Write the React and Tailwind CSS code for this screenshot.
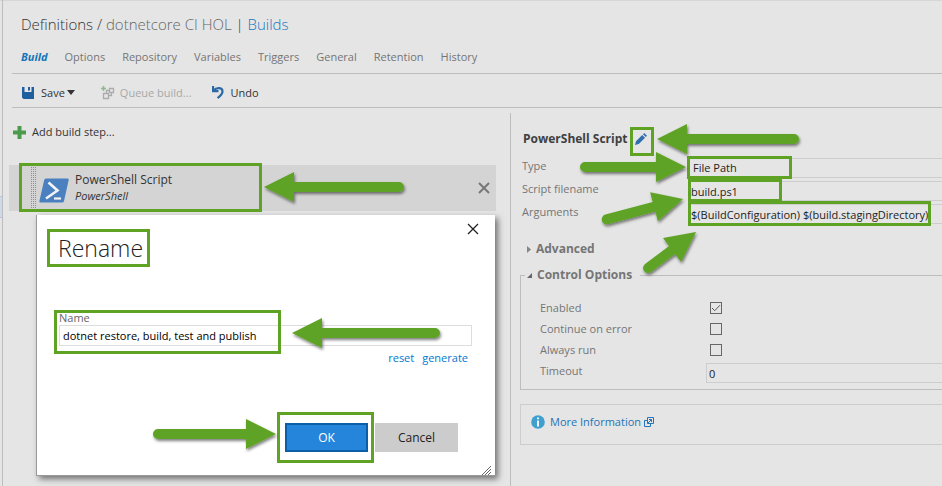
import React from "react";

const tabs = ["Options", "Repository", "Variables", "Triggers", "General", "Retention", "History"];

const arrows = [
  { x: 264, y: 187, len: 140, angle: 0 },
  { x: 657, y: 139, len: 142, angle: 0 },
  { x: 686, y: 167, len: 106, angle: 180 },
  { x: 683, y: 199, len: 84, angle: 165 },
  { x: 696, y: 232, len: 65, angle: 143 },
  { x: 292, y: 333, len: 148, angle: 0 },
  { x: 276, y: 434, len: 123, angle: 180 },
];

const frames = [
  [20, 164, 241, 47],
  [48, 230, 101, 36],
  [55, 311, 225, 42],
  [278, 413, 95, 49],
  [631, 128, 22, 27],
  [688, 157, 103, 21],
  [689, 180, 92, 21],
  [689, 202, 241, 23],
];

function Annotations() {
  return (
    <svg
      aria-hidden="true"
      className="pointer-events-none absolute top-0 left-0 z-20"
      width="942"
      height="486"
      viewBox="0 0 942 486"
    >
      <defs>
        <filter id="arrow-shadow" x="-20%" y="-60%" width="140%" height="220%">
          <feDropShadow dx="1" dy="2" stdDeviation="1.5" floodColor="#000" floodOpacity="0.5" />
        </filter>
      </defs>
      {frames.map(([x, y, w, h]) => (
        <rect key={`${x}-${y}`} x={x + 0.5} y={y + 0.5} width={w - 1} height={h - 1} fill="none" stroke="#5fa325" strokeWidth="3" />
      ))}
      {arrows.map((a) => (
        <g key={`${a.x}-${a.y}`} filter="url(#arrow-shadow)">
          <g transform={`translate(${a.x} ${a.y}) rotate(${a.angle})`} fill="#5fa325">
            <path d={`M0 0 L30 -15 V-5 H${a.len - 5} a5 5 0 0 1 0 10 H30 V15 Z`} />
          </g>
        </g>
      ))}
    </svg>
  );
}

function SaveIcon() {
  return (
    <svg width="12" height="12" viewBox="0 0 12 12" fill="#1f5f9f">
      <path d="M0 0h2.500v5h7V0H12v12H1.500L0 10.500z" />
      <path d="M6 0h2v3.500H6z" />
    </svg>
  );
}

function QueueIcon() {
  return (
    <svg width="14" height="14" viewBox="0 0 14 14" fill="none" stroke="#ababab" strokeWidth="1.300">
      <path d="M2.500 0v5M0 2.500h5" stroke="#8fb98a" strokeWidth="1.600" />
      <path d="M2.500 7.500h5v5h-5zM8.500 2.500h4v4h-4zM5.500 7V4.500h3M7.500 9.500h3V7" />
    </svg>
  );
}

function UndoIcon() {
  return (
    <svg width="12" height="13" viewBox="0 0 12 13" fill="none" stroke="#2b68a5" strokeWidth="2.200">
      <path d="M1 0v5.200h5.500" />
      <path d="M1.500 4.500C4 1.500 10.500 1 10.500 5.500c0 3-2.500 4.500-5 6.500" />
    </svg>
  );
}

function PlusIcon() {
  return (
    <svg width="13" height="13" viewBox="0 0 13 13" fill="#4c9a4c">
      <path d="M4.500 0h4v4.500H13v4H8.500V13h-4V8.500H0v-4h4.500z" />
    </svg>
  );
}

function PowerShellIcon() {
  return (
    <svg width="30" height="25" viewBox="0 0 30 25">
      <path d="M7 0.500h21.500q1.500 0 1.200 1.500L25 23q-.4 1.500-1.800 1.500H1.500Q0 24.500.4 23L5.200 2Q5.500.5 7 .5z" fill="#4a80bf" />
      <path d="M9.500 4.500l9 8-11.500 8" fill="none" stroke="#f2f4f7" strokeWidth="2.600" />
      <path d="M15 20.500h7" stroke="#f2f4f7" strokeWidth="2.200" />
    </svg>
  );
}

function CrossIcon({ size, stroke, width }) {
  return (
    <svg width={size} height={size} viewBox="0 0 12 12" fill="none" stroke={stroke} strokeWidth={width}>
      <path d="M1 1l10 10M11 1L1 11" />
    </svg>
  );
}

function PencilIcon() {
  return (
    <svg width="12" height="12" viewBox="0 0 12 12" fill="#2f6fae">
      <path d="M0 12l1-3.800L7.200 2 10 4.800 3.800 11zM8 1.200L9.200 0 12 2.800 10.800 4z" />
    </svg>
  );
}

function FieldRow({ label, id, children }) {
  return (
    <div className="flex items-start">
      <label htmlFor={id} className="w-[166px] shrink-0 text-[11px] leading-4 text-[#757575]">
        {label}
      </label>
      {children}
    </div>
  );
}

function CheckRow({ id, label, checked }) {
  return (
    <div className="flex h-[21px] items-center">
      <label htmlFor={id} className="w-[170px] shrink-0 text-[11px] leading-4 text-[#757575]">
        {label}
      </label>
      <span className="relative flex">
        <input
          id={id}
          type="checkbox"
          defaultChecked={checked}
          className="peer size-3 appearance-none border border-[#666]"
        />
        <svg
          className="pointer-events-none absolute inset-0 hidden peer-checked:block"
          width="12"
          height="12"
          viewBox="0 0 12 12"
          fill="none"
          stroke="#555"
        >
          <path d="M2 6l2.700 2.700L10 3.200" />
        </svg>
      </span>
    </div>
  );
}

function RenameDialog() {
  return (
    <section
      role="dialog"
      aria-labelledby="rename-title"
      className="absolute top-[107px] left-[33px] z-10 flex h-[261px] w-[459px] flex-col border-b border-l border-[#999] bg-white shadow-[3px_3px_6px_rgba(0,0,0,0.5)]"
    >
      <div className="flex items-start justify-between pt-2 pr-4 pl-[21px]">
        <h2 id="rename-title" className="pt-[9px] text-[23px] leading-8 font-light text-[#222]">
          Rename
        </h2>
        <button type="button" aria-label="Close" className="flex">
          <CrossIcon size={12} stroke="#222" width={1.3} />
        </button>
      </div>
      <div className="mt-[47px] flex flex-col pr-[23px] pl-[22px]">
        <label htmlFor="step-name" className="text-[11px] leading-[14px] text-[#666]">
          Name
        </label>
        <input
          id="step-name"
          defaultValue="dotnet restore, build, test and publish"
          className="h-[21px] w-full border border-[#ddd] px-[3px] text-[11px] text-black outline-none"
        />
        <div className="mt-1 flex justify-end gap-2 pr-1 text-[11px] leading-4 text-[#0078d0]">
          <a href="#reset">reset</a>
          <a href="#generate">generate</a>
        </div>
      </div>
      <div className="mt-auto mb-[23px] flex justify-end gap-[7px] pr-[37px]">
        <button type="button" className="h-[29px] w-[83px] border-2 border-[#0b5ea8] bg-[#2485db] text-xs text-white">
          OK
        </button>
        <button type="button" className="h-[29px] w-[83px] bg-[#ccc] text-xs text-[#222]">
          Cancel
        </button>
      </div>
      <svg className="absolute right-1 bottom-0" width="10" height="10" viewBox="0 0 10 10" stroke="#666">
        <path d="M1 10l9-9M4 10l6-6M7 10l3-3" />
      </svg>
    </section>
  );
}

function StepList() {
  return (
    <section className="relative w-[507px] shrink-0">
      <button type="button" className="ml-[10px] flex items-center gap-[6px] pt-4 text-[11px] leading-[16px] text-[#333]">
        <PlusIcon />
        Add build step...
      </button>
      <div className="mt-[25px] mr-[14px] ml-[6px] flex h-[46px] items-center bg-[#d4d4d4] pr-[6px] pl-[22px]">
        <svg width="5" height="42" className="shrink-0">
          <path d="M.5 0v42M2.500 0v42M4.500 0v42" stroke="#8f8f8f" strokeDasharray="1 1" />
        </svg>
        <span className="ml-[3px] pt-1">
          <PowerShellIcon />
        </span>
        <div className="ml-[6px] flex-1 pb-[2px] text-[#333]">
          <p className="text-xs leading-[16px]">PowerShell Script</p>
          <p className="text-[11px] leading-[15px] italic">PowerShell</p>
        </div>
        <button type="button" aria-label="Remove step">
          <CrossIcon size={12} stroke="#777" width={2} />
        </button>
      </div>
      <RenameDialog />
    </section>
  );
}

function StepDetails() {
  const field = "h-[20px] w-0 flex-1 rounded-none border border-r-0 border-[#cdcdcd] bg-transparent px-[2px] text-[11px] text-[#222] outline-none";
  return (
    <section className="mt-[5px] min-w-0 flex-1 border-l border-[#bdbdbd] pl-[9px]">
      <div className="flex items-center pt-[17px] pl-[3px]">
        <h2 className="text-xs leading-[18px] font-bold text-[#404040]">PowerShell Script</h2>
        <button type="button" aria-label="Rename" className="ml-[7px]">
          <PencilIcon />
        </button>
      </div>
      <div className="mt-[10px] flex flex-col gap-[3px] pl-[2px]">
        <FieldRow label="Type" id="type">
          <select id="type" className={`${field} appearance-none pl-[4px]`}>
            <option>File Path</option>
          </select>
        </FieldRow>
        <FieldRow label="Script filename" id="filename">
          <input id="filename" defaultValue="build.ps1" className={field} />
        </FieldRow>
        <FieldRow label="Arguments" id="arguments">
          <input
            id="arguments"
            defaultValue="$(BuildConfiguration) $(build.stagingDirectory)"
            className={field}
          />
        </FieldRow>
      </div>
      <button type="button" className="mt-[15px] flex items-center gap-[5px] pl-[7px] text-xs leading-[20px] font-bold text-[#757575]">
        <svg width="4" height="7" viewBox="0 0 4 7" fill="#858585">
          <path d="M0 0l4 3.500L0 7z" />
        </svg>
        Advanced
      </button>
      <fieldset className="mt-[6px] border border-r-0 border-[#bdbdbd] pb-[6px]">
        <legend className="ml-[4px] pr-2 pl-[2px]">
          <button type="button" className="flex items-center gap-[5px] text-xs leading-[20px] font-bold text-[#757575]">
            <svg width="5" height="5" viewBox="0 0 5 5" fill="#666">
              <path d="M5 0v5H0z" />
            </svg>
            Control Options
          </button>
        </legend>
        <div className="mt-3 pl-[19px]">
          <CheckRow id="enabled" label="Enabled" checked />
          <CheckRow id="continue" label="Continue on error" />
          <CheckRow id="always" label="Always run" />
          <div className="pt-[3px]">
            <FieldRow label="Timeout" id="timeout">
              <input id="timeout" defaultValue="0" className={field} />
            </FieldRow>
          </div>
        </div>
      </fieldset>
      <div className="mt-[14px] flex h-[41px] items-start border border-r-0 border-[#cdcdcd] pt-2 pl-[10px]">
        <a href="#more" className="flex items-center gap-[5px] text-[11px] leading-[18px] text-[#2374b8]">
          <svg width="14" height="14" viewBox="0 0 14 14">
            <circle cx="7" cy="7" r="6.800" fill="#3fa0d0" />
            <path d="M7 2.500v1.800M7 5.500v6" stroke="#fff" strokeWidth="1.800" />
          </svg>
          More Information
          <svg className="-ml-[2px]" width="10" height="10" viewBox="0 0 10 10" fill="none" stroke="#2374b8">
            <path d="M3 3.500H.5v6h6V7M3.500.5h6v6h-6zM3.500 6.500l4-4M5 2.500h2.500V5" />
          </svg>
        </a>
      </div>
    </section>
  );
}

export default function App() {
  return (
    <div className="relative flex min-h-screen overflow-hidden bg-[#e5e5e5] font-['Open_Sans','Noto_Sans',sans-serif] text-[#333] shadow-[inset_0_1px_0_#d6d6d6]">
      <aside className="w-[3px] shrink-0 border-r border-[#bdbdbd] pt-[196px]">
        <div className="h-[22px] border-y border-[#b7c3dc] bg-[#d0d9ea]" />
      </aside>
      <main className="flex min-w-0 flex-1 flex-col">
        <header>
          <h1 className="pt-3 pl-[18px] text-[15px] leading-6 font-light whitespace-nowrap text-[#333]">
            Definitions / <span className="text-[#666]">dotnetcore CI HOL</span> |{" "}
            <a href="#builds" className="text-[#1678c2]">
              Builds
            </a>
          </h1>
          <nav className="mt-[13px] ml-[9px] flex h-[25px] gap-[17px] border-b border-[#bdbdbd] pl-[9px] text-[11px] leading-4 text-[#757575]">
            <a href="#build" className="font-bold text-[#1673b8] italic">
              Build
            </a>
            {tabs.map((t) => (
              <a key={t} href={`#${t}`}>
                {t}
              </a>
            ))}
          </nav>
          <div className="ml-[9px] flex h-[34px] items-center border-b border-[#bdbdbd] pt-1 pl-[10px] text-[11px] leading-4">
            <button type="button" className="flex items-center gap-[7px]">
              <SaveIcon />
              <span className="flex items-center gap-[2px]">
                Save
                <svg width="8" height="5" fill="#333">
                  <path d="M0 0h8L4 5z" />
                </svg>
              </span>
            </button>
            <button type="button" disabled className="ml-[26px] flex items-center gap-[5px] text-[#a8a8a8]">
              <QueueIcon />
              Queue build...
            </button>
            <button type="button" className="ml-5 flex items-center gap-[7px]">
              <UndoIcon />
              Undo
            </button>
          </div>
        </header>
        <div className="flex flex-1">
          <StepList />
          <StepDetails />
        </div>
      </main>
      <Annotations />
    </div>
  );
}
